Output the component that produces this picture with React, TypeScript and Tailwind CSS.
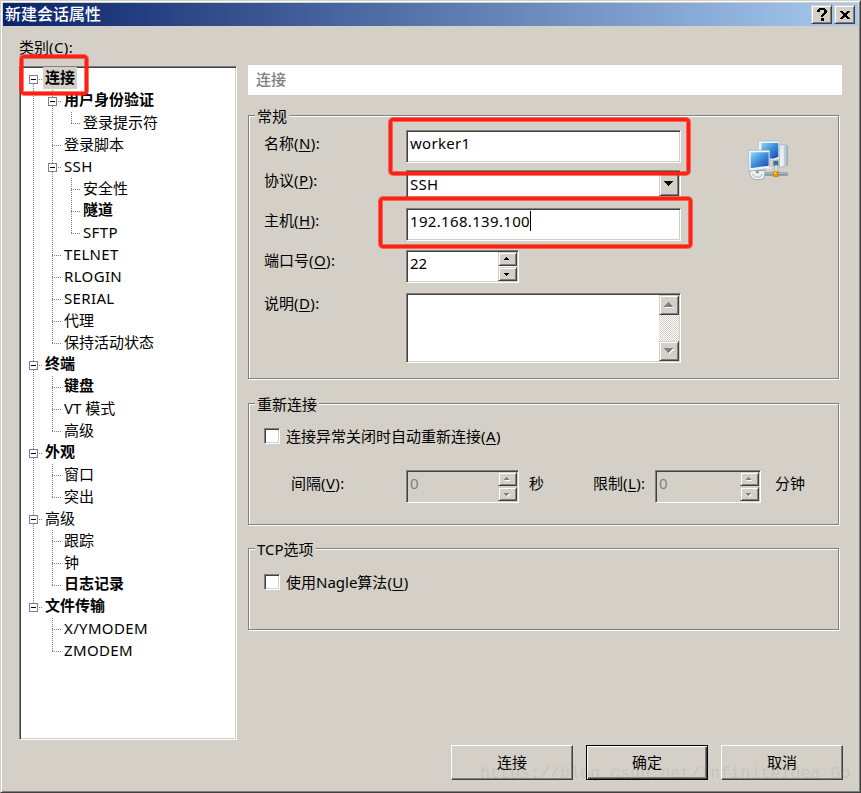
import type { ReactNode } from "react";
import clsx from "clsx";

type TreeNode = {
  label: string;
  bold?: boolean;
  selected?: boolean;
  children?: TreeNode[];
};

const categories: TreeNode[] = [
  {
    label: "连接",
    bold: true,
    selected: true,
    children: [
      { label: "用户身份验证", bold: true, children: [{ label: "登录提示符" }] },
      { label: "登录脚本" },
      {
        label: "SSH",
        children: [{ label: "安全性" }, { label: "隧道", bold: true }, { label: "SFTP" }],
      },
      { label: "TELNET" },
      { label: "RLOGIN" },
      { label: "SERIAL" },
      { label: "代理" },
      { label: "保持活动状态" },
    ],
  },
  {
    label: "终端",
    bold: true,
    children: [{ label: "键盘", bold: true }, { label: "VT 模式" }, { label: "高级" }],
  },
  { label: "外观", bold: true, children: [{ label: "窗口" }, { label: "突出" }] },
  {
    label: "高级",
    children: [{ label: "跟踪" }, { label: "钟" }, { label: "日志记录", bold: true }],
  },
  { label: "文件传输", bold: true, children: [{ label: "X/YMODEM" }, { label: "ZMODEM" }] },
];

const sunken =
  "border border-t-[#808080] border-l-[#808080] border-r-white border-b-white shadow-[inset_1px_1px_0_#404040,inset_-1px_-1px_0_#d4d0c8]";
const raised =
  "bg-[#d4d0c8] border border-t-[#d4d0c8] border-l-[#d4d0c8] border-r-[#404040] border-b-[#404040] shadow-[inset_1px_1px_0_#fff,inset_-1px_-1px_0_#808080]";

// one 19x22 cell of the dotted guide lines
function Guide({ up, down, branch, box }: { up?: boolean; down?: boolean; branch?: boolean; box?: boolean }) {
  return (
    <svg width="19" height="22" className="shrink-0" shapeRendering="crispEdges">
      <g stroke="#808080" strokeDasharray="1 1">
        {up && <path d="M9.5 0V12" />}
        {down && <path d="M9.5 12V22" />}
        {branch && <path d="M9 11.5H18" />}
      </g>
      {box && (
        <>
          <rect x="5.5" y="7.5" width="8" height="8" fill="#fff" stroke="#808080" />
          <path d="M7 11.5H12" stroke="#000" />
        </>
      )}
    </svg>
  );
}

function TreeItem({ node, trail, first, last }: { node: TreeNode; trail: boolean[]; first: boolean; last: boolean }) {
  return (
    <>
      <div className="flex h-[22px]">
        {trail.map((on, i) => (
          <Guide key={i} up={on} down={on} />
        ))}
        <Guide up={!first} down={!last} branch box={!!node.children} />
        <span
          className={clsx(
            "h-[22px] -mt-px px-[2px] whitespace-nowrap",
            node.bold ? "font-bold leading-[20px]" : "leading-[22px]",
            /^[A-Z/]+$/.test(node.label) && "tracking-[0.35px]",
            node.selected && "bg-[#d4d0c8]"
          )}
        >
          {node.label}
        </span>
      </div>
      {node.children?.map((child, i) => (
        <TreeItem
          key={child.label}
          node={child}
          trail={[...trail, !last]}
          first={false}
          last={i === node.children!.length - 1}
        />
      ))}
    </>
  );
}

function Label({ text, hotkey, colon = true }: { text: string; hotkey: string; colon?: boolean }) {
  return (
    <span className="whitespace-nowrap">
      {text}
      <span className="tracking-[0.4px]">
        (<span className="underline decoration-1 underline-offset-2">{hotkey}</span>){colon && ":"}
      </span>
    </span>
  );
}

function Group({ title, className, children }: { title: string; className?: string; children: ReactNode }) {
  return (
    <section
      className={clsx(
        "w-[591px] border border-[#808080] shadow-[1px_1px_0_#fff,inset_1px_1px_0_#fff] pl-[15px]",
        className
      )}
    >
      <h2 className="-mt-[10px] -ml-[9px] h-[22px] w-fit bg-[#d4d0c8] px-[2px] leading-[20px]">{title}</h2>
      {children}
    </section>
  );
}

function Arrow({ up, small, disabled }: { up?: boolean; small?: boolean; disabled?: boolean }) {
  const d = small
    ? up ? "M2 0h1v1h1v1h1v1H0V2h1V1h1z" : "M0 0h5v1H4v1H3v1H2V2H1V1H0z"
    : up ? "M4 0h1v1h1v1h1v1h1v1h1v1H0V4h1V3h1V2h1V1h1z" : "M0 0h9v1H8v1H7v1H6v1H5v1H4V4H3V3H2V2H1V1H0z";
  return (
    <svg width={small ? 6 : 10} height={small ? 4 : 6} shapeRendering="crispEdges">
      {disabled && <path d={d} fill="#fff" transform="translate(1 1)" />}
      <path d={d} fill={disabled ? "#808080" : "#000"} />
    </svg>
  );
}

function Spinner({ value, disabled, className }: { value: string; disabled?: boolean; className?: string }) {
  return (
    <div
      className={clsx(
        "flex h-[33px] shrink-0 justify-between p-px",
        sunken,
        disabled ? "bg-[#d4d0c8] text-[#808080]" : "bg-white",
        className
      )}
    >
      <span className="pl-[2px] leading-[22px]">{value}</span>
      <div className="flex w-[19px] flex-col gap-px">
        <button className={clsx("flex h-[14px] items-center justify-center pr-[2px]", raised)}>
          <Arrow up small disabled={disabled} />
        </button>
        <button className={clsx("flex h-[14px] items-center justify-center pt-px pr-[2px]", raised)}>
          <Arrow small disabled={disabled} />
        </button>
      </div>
    </div>
  );
}

function Field({ text, hotkey, className, children }: { text: string; hotkey: string; className?: string; children: ReactNode }) {
  return (
    <div className="flex items-start">
      <div className={clsx("w-[142px] leading-[22px]", className)}>
        <Label text={text} hotkey={hotkey} />
      </div>
      {children}
    </div>
  );
}

function Check({ text, hotkey, className }: { text: string; hotkey: string; className?: string }) {
  return (
    <label className={clsx("flex h-4 items-center gap-[6px] leading-4", className)}>
      <span className={clsx("h-4 w-4 bg-white", sunken)} />
      <Label text={text} hotkey={hotkey} colon={false} />
    </label>
  );
}

function NetworkIcon() {
  return (
    <svg width="42" height="44" viewBox="0 0 126 132" className="mt-2 ml-[66px] shrink-0">
      <defs>
        <linearGradient id="screen" x1="0" y1="0" x2="1" y2="1">
          <stop offset="0" stopColor="#8bd8f2" />
          <stop offset=".5" stopColor="#3f8bd8" />
          <stop offset="1" stopColor="#1746b4" />
        </linearGradient>
        <linearGradient id="tower">
          <stop offset="0" stopColor="#f6f8fa" />
          <stop offset=".6" stopColor="#dce4ec" />
          <stop offset="1" stopColor="#8aa4b8" />
        </linearGradient>
      </defs>
      <path d="M98 22L112 19L122 25V82L105 87H97z" fill="url(#tower)" stroke="#93a8b9" strokeWidth="2" />
      <path d="M113 24V82" stroke="#a9b9c7" strokeWidth="2" />
      <path d="M79 68H94V84H79z" fill="#42718f" />
      <path d="M34 9H98V63L81 67L34 63z" fill="#f1f5f8" stroke="#a7b7c5" strokeWidth="2" />
      <path d="M43 15H94V57L78 62L43 58z" fill="url(#screen)" />
      <path d="M55 104H121V112H55z" fill="#8498a6" stroke="#637888" strokeWidth="1.5" />
      <path d="M56 106H120" stroke="#d5dde3" strokeWidth="2" />
      <path d="M83 82H92V104H83z" fill="#dfe5e9" stroke="#91a2af" strokeWidth="2" />
      <path d="M10 98H55L51 120L40 125H24L14 119L8 108z" fill="#edf1f3" stroke="#9eacb7" strokeWidth="3" />
      <path d="M16 108L25 117H39L47 108" fill="none" stroke="#a4b1ba" strokeWidth="3" />
      <path d="M27 98H35V106H27z" fill="#7e9aac" />
      <path d="M4 37H68V91L6 99z" fill="#f3f6f8" stroke="#9eb0bf" strokeWidth="2" />
      <path d="M11 43H65V83L11 91z" fill="url(#screen)" />
      <path d="M59 90L73 86V93L59 96z" fill="#dfe8df" />
      <path d="M79 101H94V116H79z" fill="#f39a08" stroke="#bd7619" strokeWidth="2" />
      <path d="M81 103H87V108H81z" fill="#ffd05a" />
    </svg>
  );
}

// hand drawn style highlight around a control
function Marker({ className }: { className: string }) {
  return (
    <div
      className={clsx(
        "pointer-events-none absolute z-10 rounded-[4px] border-[3px] border-[#ff2014] shadow-[0_0_0_1px_#ff201499,inset_0_0_0_1px_#ff201499]",
        className
      )}
    />
  );
}

export default function App() {
  return (
    <div className="relative h-[793px] w-[861px] overflow-hidden border border-t-[#d4d0c8] border-l-[#d4d0c8] border-r-[#404040] border-b-[#404040] bg-[#d4d0c8] p-[2px] font-['Noto_Sans','Noto_Sans_CJK_SC',sans-serif] text-[15px] text-black shadow-[inset_1px_1px_0_#fff,inset_-1px_-1px_0_#808080]">
      <header className="flex h-[23px] w-[855px] items-center bg-linear-to-r/srgb from-[#0a246a] to-[#a6caf0] pr-[3px] pl-[2px]">
        <h1 className="flex-1 text-[16px] leading-[23px] font-medium text-white">新建会话属性</h1>
        <div className="flex gap-[2px]">
          <button className={clsx("flex h-[19px] w-[21px] items-center justify-center", raised)}>
            <svg width="10" height="13" viewBox="0 0 10 13" shapeRendering="crispEdges">
              <path d="M2 0h6v1h1v1h1v3H9v1H8v1H7v1H6v1H4V7h1V6h1V5h1V2H3v2H0V2h1V1h1zM4 10h3v3H4z" />
            </svg>
          </button>
          <button className={clsx("flex h-[19px] w-[21px] items-center justify-center", raised)}>
            <svg width="10" height="8" viewBox="0 0 10 8" shapeRendering="crispEdges">
              <path d="M0 0h3v1h1v1h2V1h1V0h3v1H9v1H8v1H7v2h1v1h1v1h1v1H7V7H6V6H4v1H3v1H0V7h1V6h1V5h1V3H2V2H1V1H0z" />
            </svg>
          </button>
        </div>
      </header>

      <div className="flex pl-4">
        <aside className="w-[218px]">
          <p className="pt-[10px] leading-[22px]">
            <Label text="类别" hotkey="C" />
          </p>
          <nav className={clsx("mt-2 h-[674px] bg-white py-px pr-px pl-1", sunken)}>
            {categories.map((node, i) => (
              <TreeItem key={node.label} node={node} trail={[]} first={i === 0} last={i === categories.length - 1} />
            ))}
          </nav>
        </aside>

        <main className="ml-[11px] pt-[39px]">
          <div className="h-[30px] w-[594px] bg-white pl-2 leading-[29px] font-medium text-[#808080]">连接</div>

          <Group title="常规" className="mt-5 h-[264px]">
            <div className="mt-[2px] flex items-start">
              <div>
                <Field text="名称" hotkey="N" className="pt-[2px]">
                  <div className={clsx("h-[33px] w-[275px] bg-white pt-px pl-[3px] leading-[22px] tracking-[0.3px]", sunken)}>
                    worker1
                  </div>
                </Field>
                <div className="h-[7px]" />
                <Field text="协议" hotkey="P" className="-mt-px">
                  <div className={clsx("flex h-7 w-[275px] justify-between bg-white p-px", sunken)}>
                    <span className="pt-px pl-[2px] leading-[22px] tracking-[0.3px]">SSH</span>
                    <button className={clsx("flex h-6 w-5 items-center justify-center", raised)}>
                      <Arrow />
                    </button>
                  </div>
                </Field>
                <div className="h-[10px]" />
                <Field text="主机" hotkey="H" className="pt-px">
                  <div className={clsx("flex h-[33px] w-[275px] bg-white pt-px pl-[3px] leading-[22px] tracking-[0.33px]", sunken)}>
                    192.168.139.100
                    <span className="mt-px h-5 w-px bg-black" />
                  </div>
                </Field>
                <div className="h-[9px]" />
                <Field text="端口号" hotkey="O" className="-mt-px">
                  <Spinner value="22" className="w-[113px]" />
                </Field>
                <div className="h-[10px]" />
                <Field text="说明" hotkey="D" className="-mt-px">
                  <div className={clsx("flex h-[70px] w-[275px] justify-end bg-white p-px", sunken)}>
                    <div className="flex w-5 flex-col justify-between bg-[repeating-conic-gradient(#fff_0_25%,#d4d0c8_0_50%)] bg-size-[2px_2px]">
                      <button className={clsx("flex h-5 items-center justify-center", raised)}>
                        <Arrow up disabled />
                      </button>
                      <button className={clsx("flex h-5 items-center justify-center", raised)}>
                        <Arrow disabled />
                      </button>
                    </div>
                  </div>
                </Field>
              </div>
              <NetworkIcon />
            </div>
          </Group>

          <Group title="重新连接" className="mt-6 h-[122px]">
            <Check text="连接异常关闭时自动重新连接" hotkey="A" className="mt-3" />
            <div className="mt-[26px] flex leading-[26px]">
              <div className="w-[142px] pl-[27px]">
                <Label text="间隔" hotkey="V" />
              </div>
              <Spinner value="0" disabled className="w-[113px]" />
              <span className="w-[74px] pl-[10px]">秒</span>
              <div className="w-[62px]">
                <Label text="限制" hotkey="L" />
              </div>
              <Spinner value="0" disabled className="w-[106px]" />
              <span className="pl-[14px]">分钟</span>
            </div>
          </Group>

          <Group title="TCP选项" className="mt-[23px] h-[82px]">
            <Check text="使用Nagle算法" hotkey="U" className="mt-[13px]" />
          </Group>

          <footer className="mt-[115px] ml-[203px] flex gap-[13px]">
            <button className="h-[35px] w-[122px] border border-t-white border-l-white border-r-[#404040] border-b-[#404040] shadow-[inset_-1px_-1px_0_#808080]">
              连接
            </button>
            <button className="h-[35px] w-[122px] border border-black shadow-[inset_1px_1px_0_#fff,inset_-1px_-1px_0_#404040,inset_-2px_-2px_0_#808080]">
              确定
            </button>
            <button className="h-[35px] w-[122px] border border-t-white border-l-white border-r-[#404040] border-b-[#404040] shadow-[inset_-1px_-1px_0_#808080]">
              取消
            </button>
          </footer>
        </main>
      </div>

      <Marker className="top-[54px] left-[19px] h-[40px] w-[68px]" />
      <Marker className="top-[117px] left-[388px] h-[57px] w-[301px]" />
      <Marker className="top-[196px] left-[378px] h-[51px] w-[313px]" />
      <p className="pointer-events-none absolute top-[762px] left-[479px] font-['Liberation_Mono',monospace] text-[16.7px] leading-[22px] whitespace-nowrap text-[#8080802e]">
        https://blog.csdn.net/InfiniteIdea_Go
      </p>
    </div>
  );
}
